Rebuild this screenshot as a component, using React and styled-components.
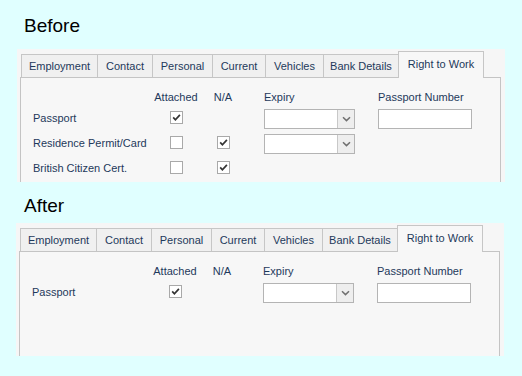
import React from 'react'
import styled, { createGlobalStyle } from 'styled-components'

// widths include the 1px border shared with the next tab
const tabs = [
  { label: 'Employment', w: 77 },
  { label: 'Contact', w: 56 },
  { label: 'Personal', w: 61 },
  { label: 'Current', w: 54 },
  { label: 'Vehicles', w: 59 },
  { label: 'Bank Details', w: 76 },
  { label: 'Right to Work', w: 86, active: true },
]

const beforeRows = [
  { label: 'Passport', attached: true, na: null, expiry: true, number: true },
  { label: 'Residence Permit/Card', attached: false, na: true, expiry: true, number: false },
  { label: 'British Citizen Cert.', attached: false, na: true, expiry: false, number: false },
]

const afterRows = [
  { label: 'Passport', attached: true, na: null, expiry: true, number: true },
]

function Check({ checked }) {
  return (
    <Box>
      {checked && (
        <svg width="11" height="11" viewBox="0 0 11 11">
          <path d="M2.2 5.4 L4.4 7.8 L8.9 2.9" fill="none" stroke="#333" strokeWidth="1.7" />
        </svg>
      )}
    </Box>
  )
}

function Combo() {
  return (
    <ComboBox>
      <ComboText />
      <ComboButton>
        <svg width="9" height="6" viewBox="0 0 9 6">
          <path d="M1 1.2 L4.5 4.6 L8 1.2" fill="none" stroke="#707070" strokeWidth="1.5" />
        </svg>
      </ComboButton>
    </ComboBox>
  )
}

function RightToWork({ rows, shift }) {
  return (
    <Panel $shift={shift}>
      <TabStrip>
        {tabs.map((t) => (
          <Tab key={t.label} $w={t.w} $active={t.active}>{t.label}</Tab>
        ))}
      </TabStrip>
      <Pane>
        <Grid>
          <span />
          <Head $center>Attached</Head>
          <Head $center $narrow>N/A</Head>
          <Head>Expiry</Head>
          <Head>Passport Number</Head>

          {rows.map((r) => (
            <React.Fragment key={r.label}>
              <Label>{r.label}</Label>
              <CheckCell><Check checked={r.attached} /></CheckCell>
              <CheckCell $narrow>{r.na !== null && <Check checked={r.na} />}</CheckCell>
              <Cell>{r.expiry && <Combo />}</Cell>
              <Cell>{r.number && <TextBox />}</Cell>
            </React.Fragment>
          ))}
        </Grid>
      </Pane>
    </Panel>
  )
}

export default function App() {
  return (
    <>
      <GlobalStyle />
      <Page>
        <Title $mt={0} $mb={12}>Before</Title>
        <RightToWork rows={beforeRows} shift={17} />
        <Title $mt={13} $mb={6}>After</Title>
        <RightToWork rows={afterRows} shift={16} />
      </Page>
    </>
  )
}

const GlobalStyle = createGlobalStyle`
  html, body {
    margin: 0;
    background: #e0ffff;
  }
  body {
    font-family: "Liberation Sans", Arial, sans-serif;
  }
`

const Page = styled.div`
  min-height: 376px;
  padding-top: 15px;
  box-sizing: border-box;
  display: flex;
  flex-direction: column;
`

const Title = styled.h2`
  margin: ${(p) => p.$mt}px 0 ${(p) => p.$mb}px 0;
  padding-left: 24px;
  font-size: 19px;
  line-height: 22px;
  font-weight: normal;
  color: #000;
`

const Panel = styled.div`
  margin-left: ${(p) => p.$shift}px;
  width: 488px;
  height: 133px;
  background: #f6f6f6;
  display: flex;
  flex-direction: column;
  overflow: hidden;
`

const TabStrip = styled.div`
  height: 28px;
  flex: none;
  display: flex;
  align-items: flex-end;
  padding-left: 4px;
  position: relative;
  z-index: 1;
`

const Tab = styled.div`
  box-sizing: border-box;
  width: ${(p) => p.$w}px;
  height: ${(p) => (p.$active ? 27 : 23)}px;
  margin-left: -1px;
  margin-bottom: ${(p) => (p.$active ? -1 : 0)}px;
  &:first-child { margin-left: 0; }
  display: flex;
  align-items: center;
  justify-content: center;
  padding-bottom: ${(p) => (p.$active ? 2 : 0)}px;
  border: 1px solid #c6c6c6;
  border-bottom: none;
  background: ${(p) => (p.$active ? '#f7f7f7' : '#f0f0f0')};
  color: #1e395b;
  font-size: 11px;
  white-space: nowrap;
`

const Pane = styled.div`
  flex: 1;
  margin: 0 4px 0 3px;
  border: 1px solid #c4c4c4;
  border-bottom: none;
  background: #f7f7f7;
  padding: 10px 0 0 12px;
  min-height: 140px;
`

const Grid = styled.div`
  display: grid;
  grid-template-columns: 117px 52px 62px 114px 94px;
  grid-template-rows: 16px;
  grid-auto-rows: 20px;
  row-gap: 5px;
  align-items: center;
  color: #1e395b;
  font-size: 11px;
`

const Head = styled.div`
  align-self: end;
  line-height: 13px;
  white-space: nowrap;
  width: ${(p) => (p.$narrow ? '42px' : 'auto')};
  text-align: ${(p) => (p.$center ? 'center' : 'left')};
`

const Label = styled.div`
  white-space: nowrap;
  line-height: 13px;
  margin-top: -2px;
`

const Cell = styled.div`
  display: flex;
  align-items: center;
  height: 20px;
`

const CheckCell = styled.div`
  width: ${(p) => (p.$narrow ? '42px' : '52px')};
  display: flex;
  justify-content: center;
  align-items: center;
  margin-top: -3px;
`

const Box = styled.div`
  box-sizing: border-box;
  width: 13px;
  height: 13px;
  border: 1px solid #a9a9a9;
  background: #fff;
  display: flex;
  align-items: center;
  justify-content: center;
`

const ComboBox = styled.div`
  box-sizing: border-box;
  width: 91px;
  height: 20px;
  border: 1px solid #b4b4b4;
  background: #fff;
  display: flex;
`

const ComboText = styled.div`
  flex: 1;
`

const ComboButton = styled.div`
  width: 16px;
  border-left: 1px solid #c8c8c8;
  background: #eeeeee;
  display: flex;
  align-items: center;
  justify-content: center;
`

const TextBox = styled.div`
  box-sizing: border-box;
  width: 95px;
  height: 20px;
  border: 1px solid #b4b4b4;
  background: #fff;
`
